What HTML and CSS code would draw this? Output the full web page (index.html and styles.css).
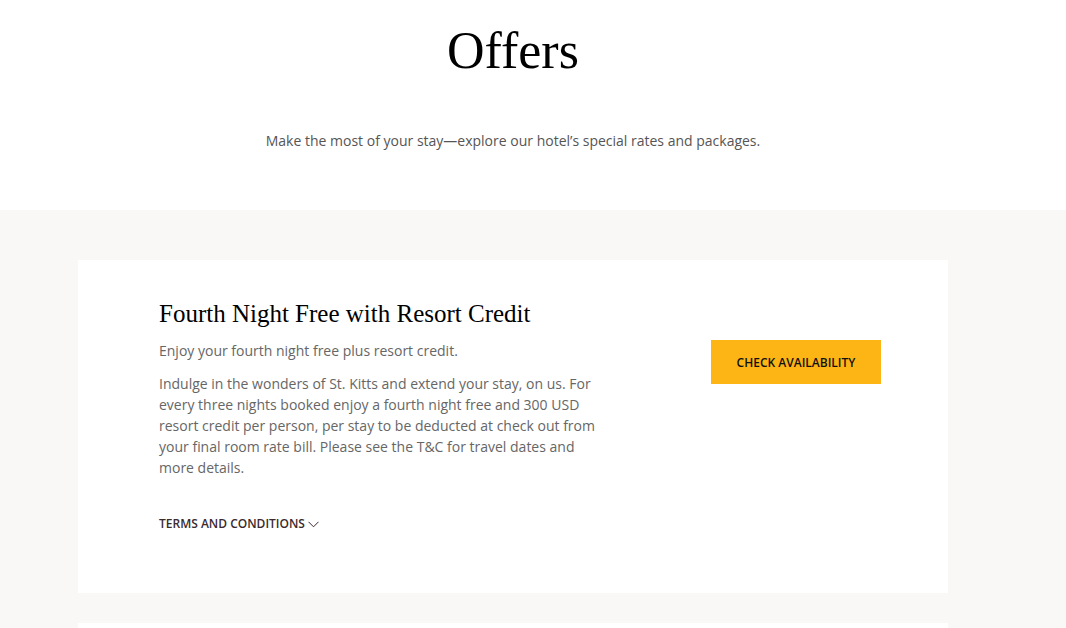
FILE: index.html
```html
<!DOCTYPE html>
<html lang="en">
<head>
<meta charset="utf-8">
<title>Offers</title>
<link rel="stylesheet" href="styles.css">
</head>
<body>
<header class="intro">
  <h1 class="page-title">Offers</h1>
  <p class="page-sub">Make the most of your stay—explore our hotel’s special rates and packages.</p>
</header>
<main class="offers">
  <article class="card">
    <div class="card-main">
      <h2 class="card-title">Fourth Night Free with Resort Credit</h2>
      <p class="card-lead">Enjoy your fourth night free plus resort credit.</p>
      <p class="card-text">Indulge in the wonders of St. Kitts and extend your stay, on us. For every three nights booked enjoy a fourth night free and 300 USD resort credit per person, per stay to be deducted at check out from your final room rate bill. Please see the T&amp;C for travel dates and more details.</p>
      <button class="terms" type="button">TERMS AND CONDITIONS <svg class="chev" width="11" height="7" viewBox="0 0 11 7"><path d="M0.5 0.8 L5.5 5.8 L10.5 0.8" fill="none" stroke="currentColor" stroke-width="1"/></svg></button>
    </div>
    <div class="card-side">
      <button class="cta" type="button">CHECK AVAILABILITY</button>
    </div>
  </article>
  <article class="card card-next"></article>
</main>
</body>
</html>
```
FILE: styles.css
```css
html, body { margin: 0; padding: 0; }
body {
  background: #fff;
  font-family: "Open Sans", "Liberation Sans", sans-serif;
  color: #555;
  overflow: hidden;
  height: 628px;
}
.intro {
  text-align: center;
  height: 210px;
  padding: 19px 40px 0 0;
  box-sizing: border-box;
}
.page-title {
  margin: 0;
  font-family: "Liberation Serif", "DejaVu Serif", serif;
  font-weight: 400;
  font-size: 52px;
  line-height: 64px;
  color: #000;
}
.page-sub {
  margin: 47px 0 0;
  font-size: 14px;
  line-height: 22px;
  color: #555;
}
.offers {
  background: #f9f8f6;
  padding: 50px 118px 0 78px;
  display: flex;
  flex-direction: column;
  gap: 30px;
  min-height: 418px;
}
.card {
  background: #fff;
  width: 870px;
  box-sizing: border-box;
  padding: 40px 67px 61px 81px;
  display: flex;
  justify-content: space-between;
}
.card-main { width: 450px; }
.card-title {
  margin: 0;
  font-family: "Liberation Serif", "DejaVu Serif", serif;
  font-weight: 400;
  font-size: 25px;
  line-height: 28px;
  color: #000;
}
.card-lead {
  margin: 12px 0 0;
  font-size: 14px;
  line-height: 21px;
  color: #666;
}
.card-text {
  margin: 12px 0 0;
  font-size: 14px;
  line-height: 21px;
  color: #666;
}
.terms {
  margin-top: 38px;
  padding: 0;
  border: 0;
  background: none;
  font-family: "Open Sans", "Liberation Sans", sans-serif;
  font-size: 12px;
  font-weight: 600;
  color: #3b2a2e;
  display: flex;
  align-items: center;
  gap: 3px;
  line-height: 16px;
}
.chev { display: block; margin-top: 1px; }
.card-side { padding-top: 40px; }
.cta {
  width: 170px;
  height: 44px;
  border: 0;
  background: #fdb515;
  font-family: "Open Sans", "Liberation Sans", sans-serif;
  font-size: 12px;
  font-weight: 600;
  color: #111;
  padding: 0;
}
.card-next { height: 40px; padding: 0; }
```
